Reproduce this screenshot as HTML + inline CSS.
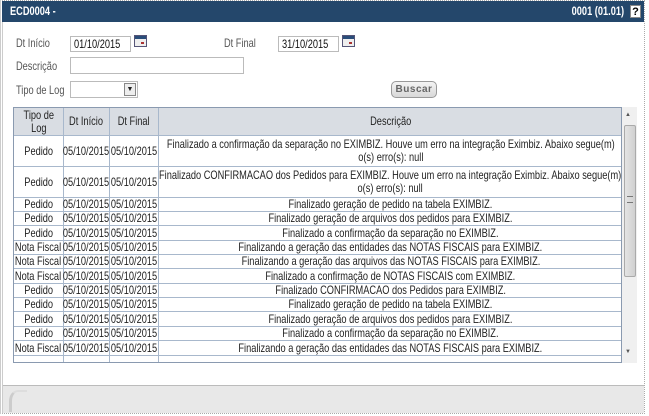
<!DOCTYPE html>
<html><head><meta charset="utf-8"><style>
*{box-sizing:border-box;margin:0;padding:0}
body{width:649px;height:416px;background:#fff;font-family:"Liberation Sans",sans-serif;font-size:12px;color:#222;position:relative;overflow:hidden}
.a{position:absolute}
.n{display:inline-block;transform:scaleX(.77);transform-origin:left center;white-space:nowrap}
.frame{left:0;top:0;width:645px;height:414px;border:1px dotted #aaa;border-left:3px double #ccc}
.title{left:2px;top:1px;width:642px;height:21px;background:#24476b;color:#fff;font-weight:bold;font-size:12px;line-height:21px}
.lbl{color:#555;font-size:12px}
.inp{border:1px solid #bbb;background:#fff;height:16px;line-height:14px;padding-left:3px;font-size:12px;color:#111}
.cal{width:13px;height:12px;border:1px solid #557;background:linear-gradient(#2a4d7a 0 3px,#eee 3px);}
.cal:after{content:"";position:absolute;right:2px;bottom:2px;width:3px;height:2px;background:#a33}
.tbl{left:13px;top:107px;width:609px;height:256px;border:1px solid #8a9ab0;overflow:hidden}
.row{position:absolute;left:0;width:608px;border-bottom:1px solid #a8b8cc;display:flex;align-items:center;text-align:center}
.row>div{height:100%;display:flex;align-items:center;justify-content:center;border-right:1px solid #a8b8cc;line-height:13px;overflow:visible;white-space:nowrap}
.row>div>span{display:inline-block;transform:scaleX(.77);transform-origin:center;white-space:nowrap}
.c1{width:50px}.c2{width:46px}.c3{width:49px}.c4{width:463px;border-right:none!important}
.hdr{background:#d9dde3;top:0;height:28px;color:#222}
</style></head><body>
<div class="a frame"></div>
<div class="a title"><span class="n" style="position:absolute;left:8px">ECD0004 -</span><span style="position:absolute;right:20px;display:inline-block;transform:scaleX(.77);transform-origin:right center">0001 (01.01)</span><span style="position:absolute;right:3px;top:4px;width:11px;height:13px;background:#fff;color:#000;font-size:11px;line-height:13px;text-align:center;border:1px solid #888">?</span></div>
<div class="a lbl" style="left:16px;top:36px"><span class="n">Dt Início</span></div>
<div class="a inp" style="left:70px;top:36px;width:61px"><span class="n">01/10/2015</span></div>
<div class="a cal" style="left:134px;top:35px"></div>
<div class="a lbl" style="left:224px;top:36px"><span class="n">Dt Final</span></div>
<div class="a inp" style="left:278px;top:36px;width:61px"><span class="n">31/10/2015</span></div>
<div class="a cal" style="left:342px;top:35px"></div>
<div class="a lbl" style="left:16px;top:59px"><span class="n">Descrição</span></div>
<div class="a inp" style="left:70px;top:57px;width:174px;height:17px"></div>
<div class="a lbl" style="left:16px;top:83px"><span class="n">Tipo de Log</span></div>
<div class="a inp" style="left:70px;top:81px;width:68px;height:17px"></div>
<div class="a" style="left:124px;top:83px;width:12px;height:13px;border:1px solid #888;background:#eee;font-size:7px;text-align:center;line-height:12px">▼</div>
<div class="a" style="left:391px;top:81px;width:46px;height:17px;border:1px solid #999;border-radius:5px;background:linear-gradient(#f4f4f4,#d8d8d8);color:#666;font-weight:bold;font-size:10px;text-align:center;line-height:15px;letter-spacing:.5px">Buscar</div>
<div class="a tbl">
<div class="row hdr"><div class="c1"><span>Tipo de<br>Log</span></div><div class="c2"><span>Dt Início</span></div><div class="c3"><span>Dt Final</span></div><div class="c4"><span>Descrição</span></div></div>
<div class="row" style="top:28px;height:31px"><div class="c1"><span>Pedido</span></div><div class="c2"><span>05/10/2015</span></div><div class="c3"><span>05/10/2015</span></div><div class="c4"><span>Finalizado a confirmação da separação no EXIMBIZ. Houve um erro na integração Eximbiz. Abaixo segue(m)<br>o(s) erro(s): null</span></div></div>
<div class="row" style="top:59px;height:31px"><div class="c1"><span>Pedido</span></div><div class="c2"><span>05/10/2015</span></div><div class="c3"><span>05/10/2015</span></div><div class="c4"><span>Finalizado CONFIRMACAO dos Pedidos para EXIMBIZ. Houve um erro na integração Eximbiz. Abaixo segue(m)<br>o(s) erro(s): null</span></div></div>
<div class="row" style="top:90px;height:14px"><div class="c1"><span>Pedido</span></div><div class="c2"><span>05/10/2015</span></div><div class="c3"><span>05/10/2015</span></div><div class="c4"><span>Finalizado geração de pedido na tabela EXIMBIZ.</span></div></div>
<div class="row" style="top:104px;height:14px"><div class="c1"><span>Pedido</span></div><div class="c2"><span>05/10/2015</span></div><div class="c3"><span>05/10/2015</span></div><div class="c4"><span>Finalizado geração de arquivos dos pedidos para EXIMBIZ.</span></div></div>
<div class="row" style="top:118px;height:15px"><div class="c1"><span>Pedido</span></div><div class="c2"><span>05/10/2015</span></div><div class="c3"><span>05/10/2015</span></div><div class="c4"><span>Finalizado a confirmação da separação no EXIMBIZ.</span></div></div>
<div class="row" style="top:133px;height:14px"><div class="c1"><span>Nota Fiscal</span></div><div class="c2"><span>05/10/2015</span></div><div class="c3"><span>05/10/2015</span></div><div class="c4"><span>Finalizando a geração das entidades das NOTAS FISCAIS para EXIMBIZ.</span></div></div>
<div class="row" style="top:147px;height:14px"><div class="c1"><span>Nota Fiscal</span></div><div class="c2"><span>05/10/2015</span></div><div class="c3"><span>05/10/2015</span></div><div class="c4"><span>Finalizando a geração das arquivos das NOTAS FISCAIS para EXIMBIZ.</span></div></div>
<div class="row" style="top:161px;height:15px"><div class="c1"><span>Nota Fiscal</span></div><div class="c2"><span>05/10/2015</span></div><div class="c3"><span>05/10/2015</span></div><div class="c4"><span>Finalizado a confirmação de NOTAS FISCAIS com EXIMBIZ.</span></div></div>
<div class="row" style="top:176px;height:14px"><div class="c1"><span>Pedido</span></div><div class="c2"><span>05/10/2015</span></div><div class="c3"><span>05/10/2015</span></div><div class="c4"><span>Finalizado CONFIRMACAO dos Pedidos para EXIMBIZ.</span></div></div>
<div class="row" style="top:190px;height:14px"><div class="c1"><span>Pedido</span></div><div class="c2"><span>05/10/2015</span></div><div class="c3"><span>05/10/2015</span></div><div class="c4"><span>Finalizado geração de pedido na tabela EXIMBIZ.</span></div></div>
<div class="row" style="top:204px;height:15px"><div class="c1"><span>Pedido</span></div><div class="c2"><span>05/10/2015</span></div><div class="c3"><span>05/10/2015</span></div><div class="c4"><span>Finalizado geração de arquivos dos pedidos para EXIMBIZ.</span></div></div>
<div class="row" style="top:219px;height:14px"><div class="c1"><span>Pedido</span></div><div class="c2"><span>05/10/2015</span></div><div class="c3"><span>05/10/2015</span></div><div class="c4"><span>Finalizado a confirmação da separação no EXIMBIZ.</span></div></div>
<div class="row" style="top:233px;height:15px"><div class="c1"><span>Nota Fiscal</span></div><div class="c2"><span>05/10/2015</span></div><div class="c3"><span>05/10/2015</span></div><div class="c4"><span>Finalizando a geração das entidades das NOTAS FISCAIS para EXIMBIZ.</span></div></div>
<div class="row" style="top:248px;height:14px;border:none"><div class="c1"></div><div class="c2"></div><div class="c3"></div><div class="c4"></div></div>
</div>
<div class="a" style="left:622px;top:107px;width:15px;height:256px;background:#f0f0f0"></div>
<div class="a" style="left:625px;top:112px;font-size:6px;color:#555">▲</div>
<div class="a" style="left:624px;top:125px;width:12px;height:152px;border:1px solid #aaa;border-radius:2px;background:linear-gradient(90deg,#e4e4e4,#d0d0d0)"></div>
<div class="a" style="left:627px;top:196px;width:6px;height:7px;border-top:1px solid #777;border-bottom:1px solid #777"></div>
<div class="a" style="left:625px;top:349px;font-size:6px;color:#555">▼</div>
<div class="a" style="left:3px;top:385px;width:641px;height:28px;background:#e8e8e8;border-top:1px solid #bbb"></div>
<div class="a" style="left:9px;top:390px;width:18px;height:22px;border-left:3px solid #ccc;border-top:2px solid #ddd;border-radius:50% 0 0 0"></div>
</body></html>
